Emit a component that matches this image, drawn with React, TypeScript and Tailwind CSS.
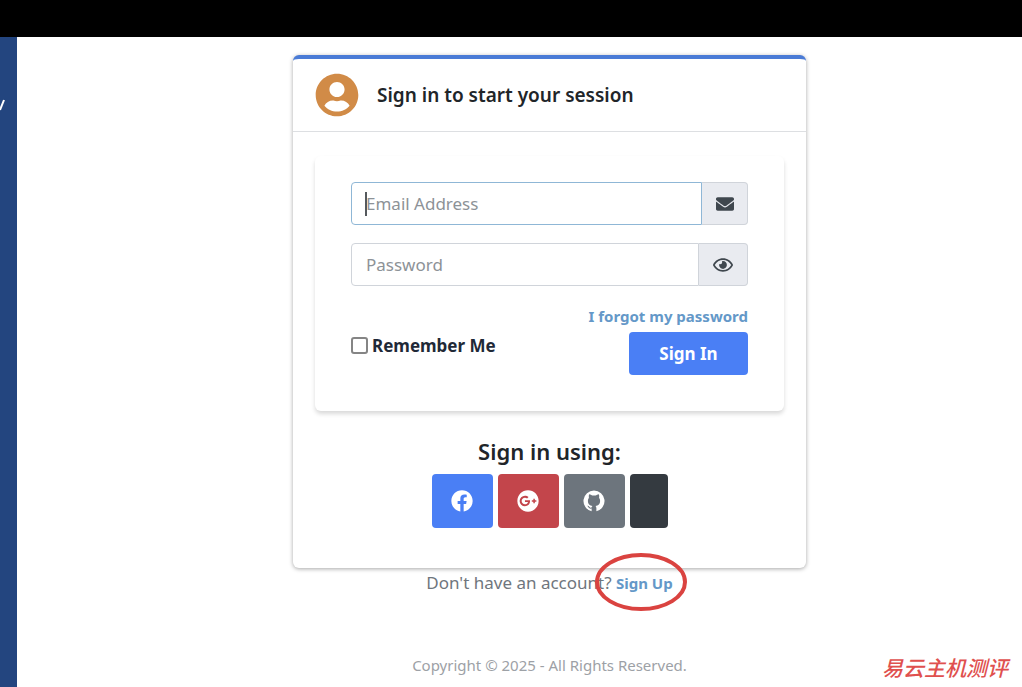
import { useState } from "react";
import {
  FaEnvelope,
  FaFacebook,
  FaGooglePlus,
  FaRegEye,
  FaUserCircle,
} from "react-icons/fa";
import { clsx } from "clsx";

function GithubCircle({ className }: { className?: string }) {
  return (
    <svg className={className} viewBox="0 0 24 24" fill="currentColor">
      <path d="M12 0.500a11.500 11.500 0 0 0-2.600 22.700V20.300c-2.300.3-3.200-.7-3.800-1.900-.3-.5-.6-.8-1-1 .9-.4 1.800.2 2.300.9.7.9 1.300 1.100 2.500.8.1-.7.4-1.200.9-1.600-3.100-.4-5-2-5-5.500 0-1.500.4-2.600 1.200-3.500-.3-1.200-.2-2.700.2-3.900 1.400.1 2.600.8 3.600 1.500 1.100-.3 2.300-.3 3.400 0 1-.7 2.200-1.400 3.600-1.500.4 1.200.5 2.700.2 3.900.8.900 1.200 2 1.200 3.500 0 3.500-1.900 5.100-5 5.500.6.600.9 1.400.9 2.500v3.200A11.500 11.500 0 0 0 12 .5z" />
    </svg>
  );
}

const providers = [
  { name: "Facebook", icon: FaFacebook, className: "w-[61px] bg-[#4a7ff5]" },
  { name: "Google Plus", icon: FaGooglePlus, className: "w-[61px] bg-[#c3454b]" },
  { name: "GitHub", icon: GithubCircle, className: "w-[61px] bg-[#6d757d]" },
  { name: "Other", icon: null, className: "w-[38px] bg-[#343a40]" },
];

function LoginForm() {
  const [showPassword, setShowPassword] = useState(false);

  return (
    <form
      className="rounded-md px-9 pt-[26px] pb-9 shadow-[0_3px_4px_rgba(0,0,0,0.15)]"
      onSubmit={(e) => e.preventDefault()}
    >
      {/* Email */}
      <div className="relative flex h-[43px]">
        <input
          type="email"
          aria-label="Email Address"
          placeholder="Email Address"
          className="min-w-0 flex-1 rounded-l border border-[#8fb7d6] px-3.5 text-[17px] text-[#495057] outline-none placeholder:text-[#8d9297]"
        />
        <span className="absolute top-2.5 left-3.5 h-6 w-0.5 bg-[#55595d]" />
        <span className="flex w-[46px] items-center justify-center rounded-r border border-l-0 border-[#d0d4da] bg-[#e9ebf0] text-[#3f474e]">
          <FaEnvelope className="h-[18px] w-[18px]" />
        </span>
      </div>

      {/* Password */}
      <div className="mt-[18px] flex h-[43px]">
        <input
          type={showPassword ? "text" : "password"}
          aria-label="Password"
          placeholder="Password"
          className="min-w-0 flex-1 rounded-l border border-[#d0d4da] px-3.5 text-[17px] text-[#495057] outline-none placeholder:text-[#8d9297]"
        />
        <button
          type="button"
          aria-label="Show password"
          onClick={() => setShowPassword(!showPassword)}
          className="flex w-[49px] items-center justify-center rounded-r border border-l-0 border-[#d0d4da] bg-[#e9ebf0] text-[#3f474e]"
        >
          <FaRegEye className="h-[20px] w-[20px]" />
        </button>
      </div>

      <div className="mt-[18px] flex items-center justify-between">
        <label className="flex items-center gap-1 pt-3 text-[17px] font-bold text-[#1f2937]">
          <input
            type="checkbox"
            className="h-[17px] w-[17px] appearance-none rounded-[3px] border-2 border-[#858585] bg-white checked:bg-[#4a7ff5]"
          />
          Remember Me
        </label>
        <div className="flex flex-col items-end gap-1">
          <a href="#" className="text-[15px] leading-6 font-bold text-[#6498c8]">
            I forgot my password
          </a>
          <button
            type="submit"
            className="h-[43px] w-[119px] rounded bg-[#4a7ff5] text-[17px] font-bold text-white"
          >
            Sign In
          </button>
        </div>
      </div>
    </form>
  );
}

export default function App() {
  return (
    <div className="flex min-h-screen flex-col overflow-hidden bg-white font-['Noto_Sans','Open_Sans',sans-serif]">
      <header className="h-[37px] shrink-0 bg-black" />

      <div className="relative flex flex-1">
        {/* Edge of the brand panel */}
        <aside className="relative w-[17px] shrink-0 bg-[#23457f]">
          <svg className="absolute top-[60px] left-0 h-4 w-2" viewBox="0 0 8 16">
            <path d="M0 13 L4 3" stroke="#fff" strokeWidth="2" />
          </svg>
        </aside>

        <main className="flex flex-1 flex-col items-center pt-[18px] pl-[60px]">
          <section className="w-full max-w-[513px] rounded-md border-t-4 border-[#4a7bd6] bg-white shadow-[0_1px_4px_rgba(0,0,0,0.35)]">
            <div className="flex h-[73px] items-center gap-[18px] border-b border-[#dddfe2] px-[22px]">
              <FaUserCircle className="h-11 w-11 text-[#d18b47]" />
              <h1 className="text-[19px] font-semibold text-[#212529]">
                Sign in to start your session
              </h1>
            </div>

            <div className="px-[22px] pt-6 pb-10">
              <LoginForm />

              <h2 className="mt-6 text-center text-[22px] leading-8 font-semibold text-[#212529]">
                Sign in using:
              </h2>
              <div className="mt-[7px] flex justify-center gap-[5px]">
                {providers.map((item) => (
                  <button
                    key={item.name}
                    type="button"
                    aria-label={item.name}
                    className={clsx(
                      "flex h-[54px] items-center justify-center rounded text-white",
                      item.className
                    )}
                  >
                    {item.icon && <item.icon className="h-[22px] w-[22px]" />}
                  </button>
                ))}
              </div>
            </div>
          </section>

          <p className="text-[17px] leading-[30px] text-[#6f767d]">
            Don't have an account?{" "}
            <span className="relative inline-block">
              <a href="#" className="text-[15px] font-bold text-[#6498c8]">
                Sign Up
              </a>
              {/* Hand-marked highlight */}
              <svg
                className="pointer-events-none absolute -top-4 -left-[22px] h-[60px] w-[94px]"
                viewBox="0 0 94 60"
              >
                <ellipse cx="47" cy="30" rx="44" ry="27" fill="none" stroke="#da4340" strokeWidth="4" />
              </svg>
            </span>
          </p>

          <footer className="mt-[55px] text-[15px] leading-6 text-[#9da1a6]">
            Copyright © 2025 - All Rights Reserved.
          </footer>
        </main>

        <span className="absolute right-3.5 bottom-1.5 font-['Noto_Sans_CJK_SC',sans-serif] text-[21px] leading-7 font-medium text-[#e0504e] italic">
          易云主机测评
        </span>
      </div>
    </div>
  );
}
